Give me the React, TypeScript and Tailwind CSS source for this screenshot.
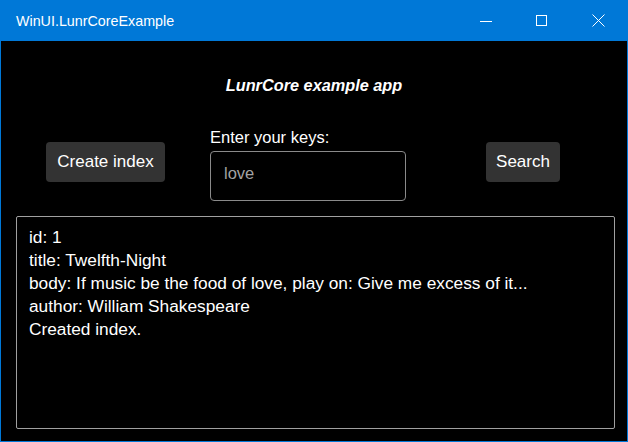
import React from "react";

const ui = { fontFamily: '"Liberation Sans", Arial, sans-serif' };

export default function App() {
  return (
    <div className="w-[628px] h-[442px] bg-[#0078d7] flex flex-col overflow-hidden" style={ui}>
      <div className="h-[41px] flex items-center text-white">
        <div className="pl-[16px] text-[14.3px] leading-[20px] flex-1">WinUI.LunrCoreExample</div>
        <div className="flex h-full pr-[2px]">
          <div className="w-[56px] h-full flex items-center justify-center">
            <svg width="12" height="12" viewBox="0 0 12 12">
              <line x1="0" y1="6.5" x2="12" y2="6.5" stroke="white" strokeWidth="1" />
            </svg>
          </div>
          <div className="w-[56px] h-full flex items-center justify-center">
            <svg width="12" height="12" viewBox="0 0 12 12">
              <rect x="0.5" y="0.5" width="10" height="10" fill="none" stroke="white" strokeWidth="1" />
            </svg>
          </div>
          <div className="w-[56px] h-full flex items-center justify-center">
            <svg width="13" height="13" viewBox="0 0 13 13">
              <path d="M0.5 0.5 L12.5 12.5 M12.5 0.5 L0.5 12.5" stroke="white" strokeWidth="1" fill="none" />
            </svg>
          </div>
        </div>
      </div>
      <div className="flex-1 mx-[1px] mb-[1px] bg-black text-white flex flex-col">
        <div className="pt-[32px] text-center text-[16.3px] leading-[24px] font-bold italic">
          LunrCore example app
        </div>
        <div className="flex items-start mt-[29px] pl-[45px]">
          <div className="mt-[16px] w-[119px] h-[40px] rounded-[4px] bg-[#333333] flex items-center justify-center text-[17px]">
            Create index
          </div>
          <div className="ml-[45px] w-[196px] flex flex-col">
            <div className="text-[16.5px] leading-[22px]">Enter your keys:</div>
            <div className="mt-[3px] h-[50px] rounded-[4px] border border-[#8a8a8a] flex items-center pl-[13px] pb-[6px] text-[16.5px] text-[#a3a3a3]">
              love
            </div>
          </div>
          <div className="ml-[80px] mt-[16px] w-[74px] h-[40px] rounded-[4px] bg-[#333333] flex items-center justify-center text-[17px]">
            Search
          </div>
        </div>
        <div className="ml-[15px] mt-[15px] w-[599px] h-[213px] rounded-[2px] border border-[#a0a0a0] pt-[9px] pl-[12px] text-[17.3px] leading-[23px]">
          <div>id: 1</div>
          <div>title: Twelfth-Night</div>
          <div>body: If music be the food of love, play on: Give me excess of it...</div>
          <div>author: William Shakespeare</div>
          <div>Created index.</div>
        </div>
      </div>
    </div>
  );
}
